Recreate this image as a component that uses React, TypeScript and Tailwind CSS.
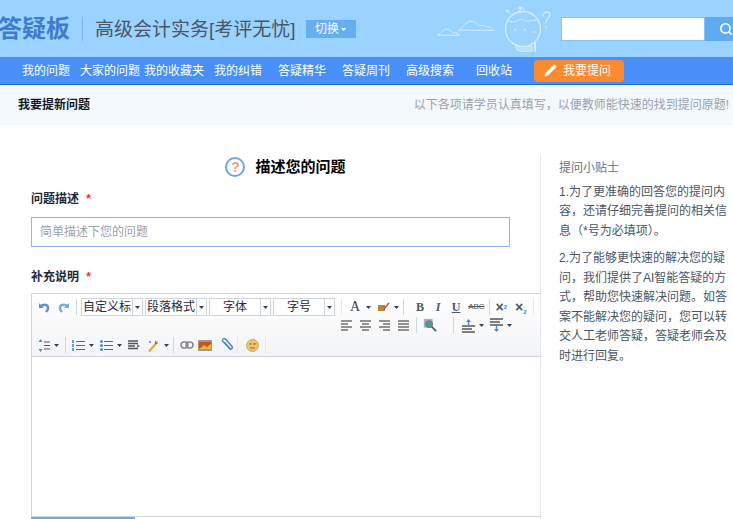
import { Search, Pencil } from 'lucide-react';

const navItems = ['我的问题', '大家的问题', '我的收藏夹', '我的纠错', '答疑精华', '答疑周刊', '高级搜索', '回收站'];

function Caret({ className = 'text-gray-700' }: { className?: string }) {
  return (
    <svg width="5" height="3" viewBox="0 0 5 3" className={`shrink-0 ${className}`}>
      <path d="M0 0h5L2.5 3z" fill="currentColor" />
    </svg>
  );
}

function Sep() {
  return <div className="h-4 w-px bg-gray-300" />;
}

function Select({ label }: { label: string }) {
  return (
    <div className="flex h-4.5 w-15.5 items-center border border-gray-300 bg-white text-xs text-gray-800">
      <span className="flex-1 text-center leading-none">{label}</span>
      <span className="flex h-full w-2.5 items-center justify-center border-l border-gray-300">
        <Caret />
      </span>
    </div>
  );
}

function Lines({ kind }: { kind: 'left' | 'center' | 'right' | 'full' }) {
  const rows = {
    left: ['M1 2h11', 'M1 5h7', 'M1 8h11', 'M1 11h7'],
    center: ['M1 2h11', 'M3 5h7', 'M1 8h11', 'M3 11h7'],
    right: ['M1 2h11', 'M5 5h7', 'M1 8h11', 'M5 11h7'],
    full: ['M1 2h11', 'M1 5h11', 'M1 8h11', 'M1 11h11'],
  }[kind];
  return (
    <svg width="13" height="13" viewBox="0 0 13 13" stroke="#666" strokeWidth="1.4">
      {rows.map((d) => (
        <path key={d} d={d} />
      ))}
    </svg>
  );
}

function Mascot() {
  return (
    <svg width="118" height="50" viewBox="0 0 118 50" fill="none" stroke="#d6eeff" strokeWidth="1" strokeLinecap="round">
      <path d="M1 31c3-1 5-6 9-6 3 0 4 3 6 4 3-1 5 0 6 2z" />
      <path d="M22 26c3-1 6-8 12-9 5 0 6 4 8 5 3-1 6-1 7 1 3-1 6 1 7 3z" />
      <circle cx="86" cy="25" r="17.5" strokeWidth="1.300" />
      <path d="M70 18c4-2 7 2 10-1 3-3 7-1 9 0 3 1 6-1 9-1 2 0 4 1 4 3" />
      <path d="M74 10c-2-1-3-2-4-3M84 9c-1-2-2-4-1-5 1-1 3 0 5 2" />
      <circle cx="83" cy="4" r="1.200" fill="#d6eeff" />
      <circle cx="70" cy="7" r="1" fill="#d6eeff" />
      <circle cx="78" cy="26" r="1" fill="#d6eeff" stroke="none" />
      <circle cx="88" cy="26" r="1" fill="#d6eeff" stroke="none" />
      <path d="M95 28h3" />
      <path d="M79 41c5 2 11 2 16 1v5c-5 1-11 1-15-1z" fill="#d6eeff" fillOpacity=".5" />
      <path d="M98 39v8" strokeWidth="2" />
      <path d="M106 12c0-3 2-4 4-4s3 2 3 3c0 3-4 3-4 8M109 23v1" strokeWidth="1.300" />
    </svg>
  );
}

function Toolbar() {
  return (
    <div className="flex h-[63px] flex-col border-b border-gray-300 bg-gradient-to-b from-white to-gray-100 pl-1 pt-1">
      <div className="flex h-4.5 items-center">
        <svg width="13" height="13" viewBox="0 0 13 13" fill="none" stroke="#5b94d6" strokeWidth="2.400" className="ml-0.5">
          <path d="M2 6c2-3 7-3 8 0 .5 2 0 3-2 5" />
          <path d="M1 2v5h5z" fill="#5b94d6" stroke="none" />
        </svg>
        <svg width="13" height="13" viewBox="0 0 13 13" fill="none" stroke="#5b94d6" strokeWidth="2.400" className="ml-1.5 opacity-80">
          <path d="M11 6C9 3 4 3 3 6c-.5 2 0 3 2 5" />
          <path d="M12 2v5H7z" fill="#5b94d6" stroke="none" />
        </svg>
        <div className="ml-1.5 mr-1 h-4 w-px bg-gray-300" />
        <div className="flex gap-0.5">
          <Select label="自定义标" />
          <Select label="段落格式" />
          <Select label="字体" />
          <Select label="字号" />
        </div>
        <div className="ml-1.5 h-4 w-px bg-gray-200" />
        <span className="ml-2 font-['Liberation_Serif',serif] text-sm leading-none text-gray-700">A</span>
        <span className="ml-1.5"><Caret /></span>
        <svg width="13" height="11" viewBox="0 0 13 11" className="ml-1.5">
          <path d="M1 3h7v6H1z" fill="#b8862c" />
          <path d="M7 7l5-6" stroke="#c2504a" strokeWidth="1.500" />
        </svg>
        <span className="ml-1"><Caret /></span>
        <div className="ml-1 h-4 w-px bg-gray-300" />
        <div className="ml-2.5 flex items-center gap-1.5 font-['Liberation_Serif',serif] text-xs font-bold leading-none text-gray-600">
          <span className="w-3 text-center">B</span>
          <span className="w-3 text-center italic">I</span>
          <span className="w-3 text-center underline">U</span>
        </div>
        <span className="ml-1.5 text-[8px] leading-none text-gray-600 line-through">ABC</span>
        <div className="ml-1 h-4 w-px bg-gray-300" />
        <span className="ml-1.5 text-sm font-bold leading-none text-gray-600">
          ×<sup className="text-[6px] text-blue-500">2</sup>
        </span>
        <span className="ml-2 text-sm font-bold leading-none text-gray-600">
          ×<sub className="text-[6px] text-blue-500">2</sub>
        </span>
        <div className="ml-1.5 h-4 w-px bg-gray-200" />
      </div>
      <div className="flex h-4.5 items-center justify-end pr-7">
        <div className="flex gap-1.5">
          <Lines kind="left" />
          <Lines kind="center" />
          <Lines kind="right" />
          <Lines kind="full" />
        </div>
        <div className="ml-1.5"><Sep /></div>
        <svg width="14" height="14" viewBox="0 0 16 16" fill="none" className="ml-1.5">
          <rect x="1" y="1" width="10" height="10" fill="#9fb4c4" />
          <circle cx="7" cy="7" r="4" fill="#4f9a9a" stroke="#777" />
          <path d="M10 10l5 5" stroke="#555" strokeWidth="2" />
        </svg>
        <div className="ml-4"><Sep /></div>
        <svg width="13" height="15" viewBox="0 0 13 15" className="ml-2">
          <path d="M6.500 1L4 4h5zM5.800 4h1.400v3H5.800z" fill="#4a86d8" />
          <path d="M0 8h13M0 11h10M0 14h13" stroke="#555" strokeWidth="1.400" />
        </svg>
        <span className="ml-1"><Caret /></span>
        <svg width="13" height="15" viewBox="0 0 13 15" className="ml-1.5">
          <path d="M0 1h13M0 4h10M0 7h13" stroke="#555" strokeWidth="1.400" />
          <path d="M6.500 14L4 11h5zM5.800 8h1.400v3H5.800z" fill="#4a86d8" />
        </svg>
        <span className="ml-1"><Caret /></span>
      </div>
      <div className="mt-0.5 flex h-4.5 items-center">
        <svg width="12" height="15" viewBox="0 0 12 15" className="ml-0.5">
          <path d="M2.500 1L.5 4h4zM2.500 14l-2-3h4z" fill="#4a86d8" />
          <path d="M6 4h6M6 7.500h6M6 11h6" stroke="#555" strokeWidth="1.200" />
        </svg>
        <span className="ml-1"><Caret /></span>
        <div className="ml-1.5 h-4 w-px bg-gray-300" />
        <svg width="13" height="13" viewBox="0 0 13 13" className="ml-1.5">
          <path d="M1 1v3M1 5v3M1 9v3" stroke="#4a86d8" strokeWidth="1.600" />
          <path d="M4 2.500h9M4 6.500h9M4 10.500h9" stroke="#666" />
        </svg>
        <span className="ml-1"><Caret /></span>
        <svg width="13" height="13" viewBox="0 0 13 13" className="ml-1.5">
          <circle cx="1.500" cy="2.500" r="1.500" fill="#4a86d8" />
          <circle cx="1.500" cy="6.500" r="1.500" fill="#4a86d8" />
          <circle cx="1.500" cy="10.500" r="1.500" fill="#4a86d8" />
          <path d="M4 2.500h9M4 6.500h9M4 10.500h9" stroke="#666" />
        </svg>
        <span className="ml-1"><Caret /></span>
        <svg width="12" height="10" viewBox="0 0 12 10" className="ml-1.5">
          <path d="M0 1h10M0 3.500h10M0 6h7M0 8.500h10" stroke="#555" strokeWidth="1.400" />
          <path d="M9 4l3 2-3 2z" fill="#4a86d8" />
        </svg>
        <svg width="14" height="14" viewBox="0 0 14 14" className="ml-1.5">
          <path d="M2 13l7-8 2 1-7 8z" fill="#e0a24a" />
          <path d="M9 2l1 2 2-1-1 2 1 1h-3z" fill="#d9534f" />
          <path d="M3 4h2M4 3v2" stroke="#4a86d8" />
        </svg>
        <span className="ml-1"><Caret /></span>
        <div className="ml-1 h-4 w-px bg-gray-300" />
        <svg width="14" height="8" viewBox="0 0 14 8" fill="none" stroke="#888" strokeWidth="1.500" className="ml-1.5">
          <rect x="1" y="1" width="7" height="6" rx="3" />
          <rect x="6" y="1" width="7" height="6" rx="3" />
        </svg>
        <svg width="14" height="11" viewBox="0 0 14 11" className="ml-1">
          <rect width="14" height="11" fill="#999" />
          <rect x="1" y="2" width="12" height="7" fill="#c9540f" />
          <path d="M1 9l5-4 3 2 4-3v5z" fill="#f3b33d" />
        </svg>
        <svg width="13" height="14" viewBox="0 0 13 14" fill="none" stroke="#4a7fd0" strokeWidth="1.400" className="ml-2">
          <path d="M11 12L3 3.500c-2-2 1-4 3-2l6 7c1 2-1 3-2 2L4.500 4.500" />
        </svg>
        <div className="ml-1 h-4 w-px bg-gray-200" />
        <svg width="13" height="13" viewBox="0 0 13 13" className="ml-2">
          <circle cx="6.500" cy="6.500" r="6" fill="#eec26f" stroke="#d9a94f" />
          <circle cx="4.500" cy="5" r="1" fill="#a06a2a" />
          <circle cx="8.500" cy="5" r="1" fill="#a06a2a" />
          <path d="M4 9h5" stroke="#a06a2a" />
        </svg>
        <div className="ml-1.5 h-4 w-px bg-gray-200" />
      </div>
    </div>
  );
}

export default function App() {
  return (
    <div className="h-[519px] w-[733px] overflow-hidden bg-white font-['Liberation_Sans','Noto_Sans_CJK_SC',sans-serif]">
      <div className="bg-[#9ad3ff] pt-px">
        <header className="flex h-14 items-center">
          <span className="-ml-0.5 text-2xl font-bold text-[#3f7ccb]">答疑板</span>
          <div className="ml-3 h-6 w-px bg-[#7fb4e0]" />
          <span className="ml-3 text-[19px] leading-none text-gray-600">高级会计实务[考评无忧]</span>
          <button className="ml-2.5 flex h-4.5 w-12.5 items-center justify-center gap-0.5 bg-[#66aef2] text-xs text-white">
            切换
            <Caret className="text-white" />
          </button>
          <div className="ml-auto flex items-center">
            <Mascot />
            <div className="ml-1.5 flex">
              <div className="h-6 w-36 border border-[#86c2f5] bg-white" />
              <button className="flex h-6 w-7 items-center overflow-hidden bg-[#5fabf1] pl-3.5">
                <Search size={14} className="shrink-0 text-white" strokeWidth={2.5} />
              </button>
            </div>
          </div>
        </header>
        <nav className="flex h-7 items-center border-b border-[#1f6fd0] bg-[#4890f7] pl-3.5 text-xs text-white">
          {navItems.map((item) => (
            <a key={item} className="w-16 text-center leading-none whitespace-nowrap">
              {item}
            </a>
          ))}
          <button className="ml-2 flex h-5.5 w-22.5 items-center gap-1.5 rounded-sm bg-[#fb8a30] pl-2.5">
            <Pencil size={13} fill="white" strokeWidth={1} />
            我要提问
          </button>
        </nav>
      </div>

      <div className="flex h-10 items-center justify-between bg-[#f3f9ff] pl-4.5 pr-1 text-xs">
        <span className="font-bold text-gray-900">我要提新问题</span>
        <span className="text-gray-400">以下各项请学员认真填写，以便教师能快速的找到提问原题!</span>
      </div>

      <main className="flex">
        <section className="-ml-px min-w-0 flex-1 overflow-hidden pl-8 pt-8">
          <div className="flex h-5 items-center justify-center gap-2.5">
            <div className="flex size-5 items-center justify-center rounded-full border-2 border-[#6ba6ec] text-sm font-bold leading-none text-[#f0a078]">
              ?
            </div>
            <h2 className="text-[15px] font-bold text-black">描述您的问题</h2>
          </div>
          <label className="mt-3 block text-xs font-bold leading-5 text-gray-800">
            问题描述 <span className="ml-1 text-red-500">*</span>
          </label>
          <div className="mt-2 mr-7.5 flex h-7.5 items-center border border-[#8ab8ea] pl-2 text-xs text-gray-400">
            简单描述下您的问题
          </div>
          <label className="mt-5 block text-xs font-bold leading-5 text-gray-800">
            补充说明 <span className="ml-1 text-red-500">*</span>
          </label>
          <div className="mt-1.5 border-l border-t border-gray-300">
            <Toolbar />
            <div className="h-40 border-b border-gray-300 bg-white" />
          </div>
          <div className="h-0.5 w-26 bg-[#5cb0f0]" />
        </section>
        <aside className="mt-7.5 h-96 w-[193px] shrink-0 border-l border-gray-200 pl-4.5 text-xs leading-relaxed text-gray-600">
          <h3 className="pt-1 text-gray-500">提问小贴士</h3>
          <p className="pt-1">1.为了更准确的回答您的提问内容，还请仔细完善提问的相关信息（*号为必填项）。</p>
          <p className="mt-2">2.为了能够更快速的解决您的疑问，我们提供了AI智能答疑的方式，帮助您快速解决问题。如答案不能解决您的疑问，您可以转交人工老师答疑，答疑老师会及时进行回复。</p>
        </aside>
      </main>
    </div>
  );
}
